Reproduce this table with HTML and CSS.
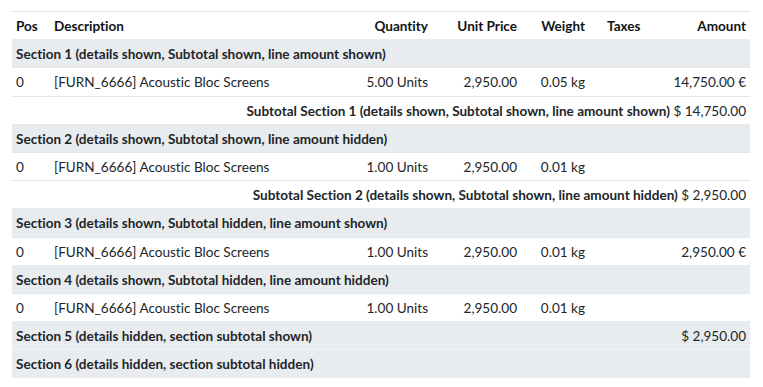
FILE: index.html
```html
<!DOCTYPE html>
<html>
<head>
<meta charset="utf-8">
<link rel="stylesheet" href="styles.css">
</head>
<body>
<div class="wrap">
<table class="lines">
  <colgroup>
    <col class="c-pos"><col class="c-desc"><col class="c-qty"><col class="c-price"><col class="c-weight"><col class="c-taxes"><col class="c-amount">
  </colgroup>
  <thead>
    <tr>
      <th class="l">Pos</th>
      <th class="l">Description</th>
      <th class="r">Quantity</th>
      <th class="r">Unit Price</th>
      <th class="r w">Weight</th>
      <th class="l">Taxes</th>
      <th class="r">Amount</th>
    </tr>
  </thead>
  <tbody>
    <tr class="section"><td colspan="7">Section 1 (details shown, Subtotal shown, line amount shown)</td></tr>
    <tr class="item">
      <td>0</td><td>[FURN_6666] Acoustic Bloc Screens</td><td class="r">5.00 Units</td><td class="r">2,950.00</td><td class="r w">0.05 kg</td><td></td><td class="r">14,750.00 €</td>
    </tr>
    <tr class="subtotal"><td colspan="7"><strong>Subtotal Section 1 (details shown, Subtotal shown, line amount shown)</strong> $ 14,750.00</td></tr>
    <tr class="section"><td colspan="7">Section 2 (details shown, Subtotal shown, line amount hidden)</td></tr>
    <tr class="item">
      <td>0</td><td>[FURN_6666] Acoustic Bloc Screens</td><td class="r">1.00 Units</td><td class="r">2,950.00</td><td class="r w">0.01 kg</td><td></td><td class="r"></td>
    </tr>
    <tr class="subtotal"><td colspan="7"><strong>Subtotal Section 2 (details shown, Subtotal shown, line amount hidden)</strong> $ 2,950.00</td></tr>
    <tr class="section"><td colspan="7">Section 3 (details shown, Subtotal hidden, line amount shown)</td></tr>
    <tr class="item">
      <td>0</td><td>[FURN_6666] Acoustic Bloc Screens</td><td class="r">1.00 Units</td><td class="r">2,950.00</td><td class="r w">0.01 kg</td><td></td><td class="r">2,950.00 €</td>
    </tr>
    <tr class="section"><td colspan="7">Section 4 (details shown, Subtotal hidden, line amount hidden)</td></tr>
    <tr class="item">
      <td>0</td><td>[FURN_6666] Acoustic Bloc Screens</td><td class="r">1.00 Units</td><td class="r">2,950.00</td><td class="r w">0.01 kg</td><td></td><td class="r"></td>
    </tr>
    <tr class="section"><td colspan="6">Section 5 (details hidden, section subtotal shown)</td><td class="r amt">$ 2,950.00</td></tr>
    <tr class="section"><td colspan="7">Section 6 (details hidden, section subtotal hidden)</td></tr>
  </tbody>
</table>
</div>
</body>
</html>
```

FILE: styles.css
```css
html, body {
  margin: 0;
  padding: 0;
  background: #ffffff;
}

body {
  font-family: Lato, "Open Sans", sans-serif;
  font-size: 13.55px;
  color: #212529;
  font-variant-ligatures: none;
}

.wrap {
  padding: 11px 13px 0 12px;
}

.lines {
  width: 738px;
  table-layout: fixed;
  border-collapse: collapse;
}

.c-pos { width: 38px; }
.c-desc { width: 302px; }
.c-qty { width: 80px; }
.c-price { width: 89px; }
.c-weight { width: 82px; }
.c-taxes { width: 57px; }
.c-amount { width: 90px; }

.lines th,
.lines td {
  padding: 5px 4px 3px 4px;
  line-height: 19.2px;
  white-space: nowrap;
  overflow: visible;
  border-top: 1px solid #e3e6e9;
}

.lines th {
  font-weight: 700;
  color: #111418;
}

.l { text-align: left; }
.r { text-align: right; }
.lines .w { padding-right: 18px; }

.section td {
  background: #e9ecef;
  font-weight: 700;
  border-top-color: #e9ecef;
}

.section + .section td {
  border-top-color: #f3f4f6;
}

.section td.amt {
  font-weight: 400;
}

.subtotal td {
  text-align: right;
}

.subtotal strong {
  font-weight: 700;
}
```
